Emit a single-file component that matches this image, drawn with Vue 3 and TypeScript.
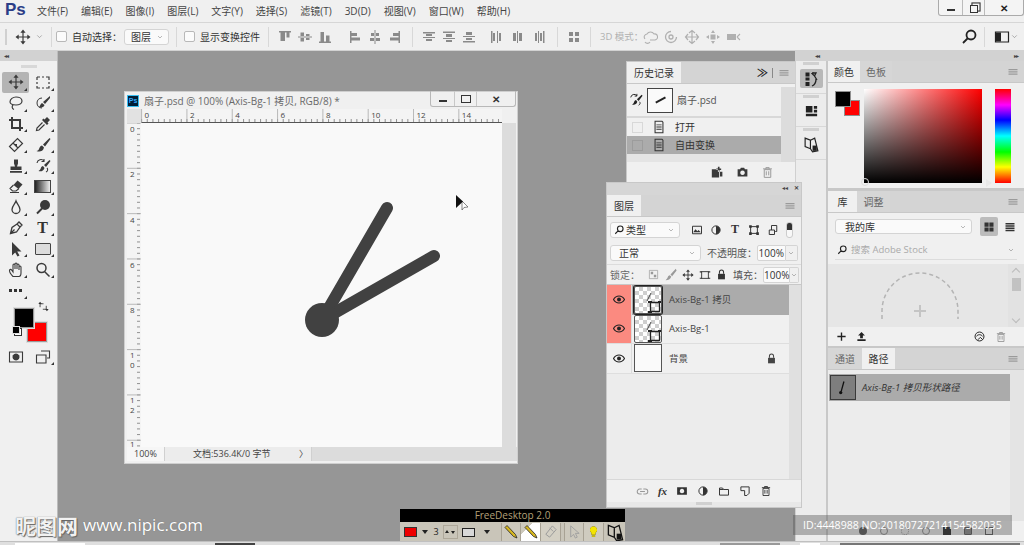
<script setup lang="ts">
import { h } from 'vue'

type IconDef = { f?: string; s?: string; w?: number }

const icons: Record<string, IconDef> = {
  move: { s: 'M8 3v10M3 8h10', f: 'M8 .5l2.6 3.2H5.4zM8 15.500l-2.600-3.200h5.200zM.5 8l3.200-2.600v5.200zM15.500 8l-3.200 2.600V5.400z', w: 1.2 },
  chev: { s: 'M4 6l4 4 4-4', w: 1 },
  marquee: { s: 'M2 3h3M7 3h2M11 3h3v3M14 8v2M14 12v2h-3M9 14H7M5 14H2v-2M2 10V8M2 6V3', w: 1.2 },
  lasso: { s: 'M2 7c0-3 3-5 6-5s6 1.500 6 4-3 4-6 4-6-1-6-3zM5 10c-1 1-1.500 3.500 1 4.500', w: 1.2 },
  quick: { s: 'M7 3C4 3 2 5 2 8s2 5 5 5', f: 'M15 1L8 7l2 2 5-6zM7 8c-2 1-1.500 3-3 4 3 1 5 0 5.500-2z', w: 1 },
  crop: { s: 'M4 1v11h11M1 4h11v11', w: 2 },
  dropper: { f: 'M12 1l3 3-2.500 2.500 1 1-1.500 1.500-5-5 1.500-1.500 1 1z', s: 'M7.500 6.500L2 12l-.5 2.500L4 14l5.500-5.500', w: 1.2 },
  heal: { s: 'M1.500 9.500l8-8 5 5-8 8zM5 6l5 5', f: 'M7 7h2v2H7z', w: 1.2 },
  brush: { f: 'M14.500 1L8 7.500l2 2L15.500 2zM7 8.500c-2 .5-2.500 2-3 3.500-.3 1-1.500 2-2.500 2 2.500 1.200 6.500.8 7.500-3.500z' },
  stamp: { f: 'M6 1.500h4v4l-1 3h4.500V12h-11V8.500H7l-1-3zM2 13h12v1.800H2z' },
  histbrush: { f: 'M14.500 2L9 7l2 2 4.500-6zM8 8c-2 .5-2 2-2.500 3-.3.8-1 1.500-2 2 2 .8 5 .5 6-3z', s: 'M2 5a4 4 0 0 1 7-2M9 1v2.500H6.500M12 10c1 1 1 3-1 4', w: 1.100 },
  eraser: { f: 'M9.500 2.500l5 4-4 4.500-5-4z', s: 'M5.500 7l-3.500 3.500L4.500 13H8l3-2.500M2 14.500h9', w: 1.100 },
  drop: { s: 'M8 2C7 5 4 7 4 10.500a4 4 0 0 0 8 0C12 7 9 5 8 2z', w: 1.300 },
  burn: { f: 'M15 6a5 5 0 1 1-10 0 5 5 0 0 1 10 0z', s: 'M7 9.500L2 14.500', w: 2 },
  pen: { s: 'M2.500 13.500l1.500-6L9 4l3 3-3.500 5zM2.500 13.500L6.500 9.500M9 4l2-2 3 3-2 2', w: 1.300 },
  arrow: { f: 'M4 1v13.500l3.200-3 2.300 4 2-1-2.300-4h4.300z' },
  hand: { s: 'M5 14.500C3.500 13 1.500 10 1.500 8.500s1.500-1.500 2.500 0L5 10V3a1 1 0 0 1 2 0v4V2a1 1 0 0 1 2 0v5V3a1 1 0 0 1 2 0v5V5a1 1 0 0 1 2 0v6c0 2-1 3.500-2 3.500z', w: 1.100 },
  zoom: { s: 'M11 6a4.500 4.500 0 1 1-9 0 4.500 4.500 0 0 1 9 0zM9.500 9.500L14.500 14.500', w: 1.500 },
  mask: { s: 'M1.500 3h13v10h-13z', f: 'M8 4.500a3.500 3.500 0 1 0 .01 0z', w: 1.100 },
  screen: { s: 'M6 2h8.500v7H12M1.500 6H11v8H1.500z', w: 1.100 },
  swap: { s: 'M3 9V4h5M12 7v5H7', f: 'M3 1L.5 4.500h5zM13 15l2.500-3.500h-5z', w: 1.200 },
  alignT: { f: 'M2 2h12v1.500H2zM3.500 3.500H8V12H3.500zM9.500 3.500h3v5h-3z' },
  alignV: { f: 'M1 7.500h14v1H1zM3.500 3.500H7v9H3.500zM9 5h3.500v6H9z' },
  alignB: { f: 'M2 12.500h12V14H2zM3.500 3H7v9.500H3.500zM9 6.500h3.500v6H9z' },
  alignL: { f: 'M3 2h1.500v12H3zM4.500 4H10v3H4.500zM4.500 8.500H13v3H4.500z' },
  alignH: { f: 'M7.500 1h1v14h-1zM4 4h8v3H4zM3 9h10v3H3z' },
  alignR: { f: 'M11.500 2H13v12h-1.500zM6 4h5.500v3H6zM3 8.500h8.500v3H3z' },
  distT: { f: 'M2 3h12v1.500H2zM5 5h6v2H5zM2 8h12v1H2zM5 10h6v2H5z' },
  distV: { f: 'M2 2.500h12V4H2zM5 5h6v3H5zM2 9h12v1H2zM5 11h6v2H5z' },
  distB: { f: 'M5 3h6v3H5zM2 7h12v1H2zM5 9h6v2H5zM2 12h12v1.500H2z' },
  distL: { f: 'M3 2h1.500v12H3zM5 4h2v8H5zM9 2h1v12H9zM11 4h2v8h-2z' },
  distC: { f: 'M3 4h3v8H3zM7 2h1v12H7zM9 4h3v8H9z' },
  distR: { f: 'M3 4h2v8H3zM6 2h1v12H6zM8 4h2v8H8zM11 2h1.500v12H11z' },
  spread: { f: 'M3 3h4v4H3zM9 3h4v4H9zM3 9h4v4H3zM9 9h4v4H9z' },
  cloud3d: { s: 'M3 10a3 3 0 0 1 2-5 4 4 0 0 1 7 0 3 3 0 0 1 1 6H8M3 13a3 3 0 0 0 5 0', w: 1.100 },
  orbit: { s: 'M13.500 8a5.500 5.500 0 1 1-5.500-5.500M10 8a2 2 0 1 1-4 0 2 2 0 0 1 4 0z', w: 1.300 },
  pan3d: { s: 'M8 1.500v13M1.500 8h13M5 4l3-2.500L11 4M5 12l3 2.500 3-2.500M4 5L1.500 8 4 11M12 5l2.500 3L12 11', w: 1.200 },
  slide3d: { f: 'M5.500 5.500h5v5h-5zM8 1L6 4h4zM8 15l-2-3h4zM1 8l3-2v4zM15 8l-3-2v4z' },
  camera3d: { f: 'M1 5h9v6H1z', s: 'M11 8l3-3M11 8l3 3', w: 1.100 },
  search: { s: 'M14.500 6a4.500 4.500 0 1 1-9 0 4.500 4.500 0 0 1 9 0zM6.500 9.500L2 14', w: 1.800 },
  workspace: { s: 'M1.500 3h13v10h-13z', f: 'M2 3.500h5v9H2z', w: 1.200 },
  menu: { f: 'M2 4h12v1.500H2zM2 7h12v1.500H2zM2 10h12v1.500H2z' },
  page: { s: 'M3.500 1.500h8l1 1v12h-9z', f: 'M5 5h6v1H5zM5 7.500h6v1H5zM5 10h6v1H5z', w: 1.200 },
  newdoc: { f: 'M1 4h7l2 2v8H1zM8.500 1h2v2h2v2h-2v2h-2V5h-2V3h2zM11 7h3v6h-3z' },
  camera: { f: 'M2 4h3l1-2h4l1 2h3v9H2z M8 5.500a2.800 2.800 0 1 0 .01 0z' },
  trash: { s: 'M4 4.500h8V14H4zM2.500 3.500h11M6 3.500V2h4v1.500M6.500 6.500v5M9.500 6.500v5', w: 1.200 },
  history: { f: 'M2.500 1.500h4v4h-4zM2.500 6.500h4v3h-4zM2.500 11h4v4h-4z', s: 'M13 8c0 4-1.500 6-4 7M9 2h4l-1.500 3L14 9M11 1.500l-2 1 2 2', w: 1.300 },
  cube: { f: 'M2 2h7v7H2zM10.500 2H14v3h-3.500zM10.500 6H14v3h-3.500zM2 10.500h12V13H2z' },
  glyph: { s: 'M2 2l5 2v8l-5-2zM7 4l4-2 3 12-5 1-2-3', f: 'M9 9h4v5H9z', w: 1.100 },
  image: { s: 'M2 3h12v10H2z', f: 'M3 11l3-4 2.500 2.500L10 8l3 3z', w: 1.300 },
  adjust: { s: 'M13.500 8a5.500 5.500 0 1 1-11 0 5.500 5.500 0 0 1 11 0z', f: 'M8 2.500a5.500 5.500 0 0 1 0 11z', w: 1.300 },
  frame: { s: 'M3.500 3.500h9v9h-9z', f: 'M1.500 1.500h3.500v3.500H1.500zM11 1.500h3.500v3.500H11zM1.500 11h3.500v3.500H1.500zM11 11h3.500v3.500H11z', w: 1.300 },
  smart: { s: 'M6 8V2h7v8h-2M3 8h7v6H3z', w: 1.300 },
  checker: { s: 'M2 2h12v12H2z', f: 'M4 4h3.500v3.500H4zM8.500 8.500H12V12H8.500z', w: 1 },
  penlock: { f: 'M14.500 1L8 8l2 2 5.500-7zM7 9c-2 .5-2 2-3 3.500L2 15c3 0 6-1 7-4.500z' },
  cropsm: { s: 'M3.500 3.500h9v9h-9z', f: 'M1 3h3v1.500H1zM12 3h3v1.500h-3zM1 11.500h3V13H1zM12 11.500h3V13h-3z', w: 1.200 },
  lock: { f: 'M3 7h10v8H3z', s: 'M5 7V4.500a3 3 0 0 1 6 0V7', w: 1.500 },
  link: { s: 'M7 5H4.500a3 3 0 0 0 0 6H7M9 5h2.500a3 3 0 0 1 0 6H9M5 8h6', w: 1.300 },
  layermask: { f: 'M1.500 3h13v10h-13zM8 5a3 3 0 1 0 .01 0z' },
  folder: { s: 'M2 4h4l1.500 2H14v7.500H2zM2 6h5.500', w: 1.300 },
  newlayer: { s: 'M2.500 2.500h11V11l-3 3h-3V7.500H2.500z', w: 1.300 },
  plus: { f: 'M7 2h2v5h5v2H9v5H7V9H2V7h5z' },
  upload: { f: 'M8 1.500l5 5H10v4H6v-4H3zM2 12h12v2.500H2z' },
  cc: { s: 'M13.500 8a5.500 5.500 0 1 1-11 0 5.500 5.500 0 0 1 11 0zM4 8c2-3 6-3 8 0M6 12l3-3 3 3', w: 1.200 },
  grid: { f: 'M2 2h5.500v5.500H2zM8.500 2H14v5.500H8.500zM2 8.500h5.500V14H2zM8.500 8.500H14V14H8.500z' },
  list: { f: 'M2 2.500h12v2H2zM2 5.500h12v2H2zM2 8.500h12v2H2zM2 11.500h12v2H2z' },
  eraserSm: { s: 'M10 2l4 4-7 8-4-3zM7 4l4 4', w: 1 },
  pointer: { s: 'M5 2v12l3-3 2 4 2-1-2-4h4z', w: 1 },
  bulb: { f: 'M8 1.500a4.500 4.500 0 0 0-2.500 8.200V12h5V9.700A4.500 4.500 0 0 0 8 1.500zM6 13h4v1.500H6z' }
}

const Ic = (p: { n: string; s?: number }) => {
  const def = icons[p.n] ?? {}
  const size = p.s ?? 16
  const kids = []
  if (def.s) kids.push(h('path', { d: def.s, fill: 'none', stroke: 'currentColor', 'stroke-width': def.w ?? 1.2 }))
  if (def.f) kids.push(h('path', { d: def.f, fill: 'currentColor', 'fill-rule': 'evenodd' }))
  return h('svg', { viewBox: '0 0 16 16', width: size, height: size, style: 'display:block;flex:none' }, kids)
}
Ic.props = ['n', 's']

const menus = ['文件(F)', '编辑(E)', '图像(I)', '图层(L)', '文字(Y)', '选择(S)', '滤镜(T)', '3D(D)', '视图(V)', '窗口(W)', '帮助(H)']

const tools = ['move', 'marquee', 'lasso', 'quick', 'crop', 'dropper', 'heal', 'brush', 'stamp', 'histbrush', 'eraser', 'gradient', 'drop', 'burn', 'pen', 'text', 'arrow', 'shape', 'hand', 'zoom']

const STEP = 45.32
const hMajor = Array.from({ length: 8 }, (_, i) => ({ x: 14.6 + i * STEP, label: String(i * 2) }))
const hMinor = Array.from({ length: 64 }, (_, i) => 14.6 + (i * STEP) / 8).filter((x) => x < 375)
const vMajor = Array.from({ length: 8 }, (_, i) => ({ y: i * STEP, label: i === 7 ? '1' : String(i * 2) }))
const vMinor = Array.from({ length: 58 }, (_, i) => (i * STEP) / 8).filter((y) => y < 324)

const layers = [
  { name: 'Axis-Bg-1 拷贝', red: true, sel: true, kind: 'check', locked: false },
  { name: 'Axis-Bg-1', red: true, sel: false, kind: 'check', locked: false },
  { name: '背景', red: false, sel: false, kind: 'plain', locked: true }
]
</script>

<template>
  <div class="app">
    <header class="menubar">
      <span class="ps">Ps</span>
      <nav class="menus"><span v-for="m in menus" :key="m">{{ m }}</span></nav>
      <div class="winctl">
        <span class="cell c1"><i class="min"></i></span>
        <span class="cell c2"><i class="rest"></i></span>
        <span class="cell c3">✕</span>
      </div>
    </header>

    <div class="options">
      <i class="grip"></i>
      <Ic class="ml8" n="move" />
      <Ic class="ml4 thin" n="chev" :s="9" />
      <i class="sep ml7"></i>
      <i class="check ml4"></i>
      <span class="opt-label l1">自动选择：</span>
      <span class="select s1">图层<Ic class="thin" n="chev" :s="8" /></span>
      <i class="sep ml7"></i>
      <i class="check ml7"></i>
      <span class="opt-label l2">显示变换控件</span>
      <i class="sep ml11"></i>
      <div class="agroup ml8"><Ic n="alignT" /><Ic n="alignV" /><Ic n="alignB" /></div>
      <div class="agroup ml14"><Ic n="alignL" /><Ic n="alignH" /><Ic n="alignR" /></div>
      <i class="sep ml9"></i>
      <div class="agroup ml8"><Ic n="distT" /><Ic n="distV" /><Ic n="distB" /></div>
      <div class="agroup wide ml11"><Ic n="distL" /><Ic n="distC" /><Ic n="distR" /></div>
      <i class="sep ml9"></i>
      <div class="agroup ml8"><Ic n="spread" /></div>
      <i class="sep ml8"></i>
      <span class="mode">3D 模式：</span>
      <div class="agroup d3"><Ic n="cloud3d" /><Ic n="orbit" /><Ic n="pan3d" /><Ic n="slide3d" /><Ic n="camera3d" /></div>
      <div class="spacer"></div>
      <Ic class="dark" n="search" />
      <i class="sep ml7"></i>
      <Ic class="ml9 dark" n="workspace" />
      <Ic class="thin" n="chev" :s="9" />
    </div>

    <div class="workspace">
      <aside class="toolbox">
        <div class="collapse left">◂◂</div>
        <div class="dragline"><i></i></div>
        <div class="toolgrid">
          <span v-for="(t, i) in tools" :key="t" class="tool" :class="{ active: i === 0 }">
            <i v-if="t === 'gradient'" class="gradient-ic"></i>
            <span v-else-if="t === 'text'" class="t-glyph">T</span>
            <i v-else-if="t === 'shape'" class="shape-ic"></i>
            <Ic v-else :n="t" />
          </span>
          <span class="tool dots"><i></i><i></i><i></i></span>
        </div>
        <div class="swatches">
          <i class="fg"></i><i class="bg"></i>
          <Ic class="swap" n="swap" :s="11" />
          <span class="mini"><i></i><i></i></span>
        </div>
        <div class="modes">
          <span class="tool"><Ic n="mask" /></span>
          <span class="tool"><Ic n="screen" /></span>
        </div>
      </aside>

      <main class="canvas">
        <section class="doc">
          <div class="doc-title">
            <span class="doc-ps">Ps</span>
            <span class="doc-name">扇子.psd @ 100% (Axis-Bg-1 拷贝, RGB/8) *</span>
            <div class="doc-ctl">
              <span class="dc d1"><i class="min"></i></span>
              <span class="dc d2"><i class="maxi"></i></span>
              <span class="dc d3">✕</span>
            </div>
          </div>
          <div class="doc-inner">
            <svg class="ruler-h" width="375" height="14" viewBox="0 0 375 14">
              <rect x="0" y="0" width="14.600" height="14" fill="#e2e2e2" />
              <line v-for="x in hMinor" :key="x" :x1="x" :x2="x" y1="10" y2="13" stroke="#777" stroke-width=".8" />
              <g v-for="m in hMajor" :key="m.x">
                <line :x1="m.x" :x2="m.x" y1="0" y2="14" stroke="#aaa" stroke-width=".8" />
                <text :x="m.x + 3" y="9" class="rt">{{ m.label }}</text>
              </g>
              <line x1="14.600" x2="375" y1="13.500" y2="13.500" stroke="#555" stroke-width="1.200" />
            </svg>
            <div class="doc-mid">
              <svg class="ruler-v" width="14" height="324" viewBox="0 0 14 324">
                <line v-for="y in vMinor" :key="y" x1="10" x2="13" :y1="y" :y2="y" stroke="#777" stroke-width=".8" />
                <g v-for="(m, i) in vMajor" :key="m.y">
                  <line x1="0" x2="14" :y1="m.y" :y2="m.y" stroke="#aaa" stroke-width=".8" />
                  <text v-if="m.label.length === 1" x="3" :y="m.y + (i === 7 ? 6.500 : 9)" class="rt">{{ m.label }}</text>
                  <template v-else>
                    <text x="3" :y="m.y + 8" class="rt">{{ m.label[0] }}</text>
                    <text x="3" :y="m.y + 18" class="rt">{{ m.label[1] }}</text>
                  </template>
                </g>
              </svg>
              <svg class="art" width="361" height="324" viewBox="0 0 361 324">
                <line x1="181" y1="197" x2="246" y2="85" stroke="#414141" stroke-width="12" stroke-linecap="round" />
                <line x1="181" y1="197" x2="293" y2="133" stroke="#414141" stroke-width="12" stroke-linecap="round" />
                <circle cx="181" cy="197" r="17" fill="#414141" />
                <path d="M321 78l6 6-4 .5-2 2.500z" fill="#fff" stroke="#555" stroke-width=".7" />
                <path d="M315 72v13l7-6.500z" fill="#111" />
              </svg>
              <div class="doc-scroll"></div>
            </div>
            <div class="doc-status">
              <span class="st-zoom">100%</span>
              <span class="st-info"><b>文档:536.4K/0 字节</b><i>〉</i></span>
              <span class="st-rest"></span>
            </div>
          </div>
        </section>

        <section class="history panel">
          <div class="tabs">
            <span class="tab on">历史记录</span>
            <span class="fill"></span>
            <span class="more">≫</span><i class="vbar"></i>
            <Ic class="menu-ic" n="menu" :s="12" />
          </div>
          <div class="hist-body">
            <div class="hist-list">
              <div class="snap">
                <Ic class="dark" n="histbrush" :s="14" />
                <span class="snap-thumb"><i></i></span>
                <span class="snap-name">扇子.psd</span>
              </div>
              <div class="hist-row"><i class="hbox"></i><Ic n="page" :s="14" /><span>打开</span></div>
              <div class="hist-row sel"><i class="hbox"></i><Ic n="page" :s="14" /><span>自由变换</span></div>
              <div class="hist-blank"></div>
            </div>
            <div class="hist-scroll"></div>
          </div>
          <div class="hist-foot">
            <Ic n="newdoc" :s="13" /><Ic n="camera" :s="13" /><Ic class="grey" n="trash" :s="13" />
          </div>
        </section>

        <section class="layers panel">
          <div class="float-bar"><span>◂◂</span><span class="x">✕</span></div>
          <div class="tabs">
            <span class="tab on">图层</span>
            <span class="fill"></span>
            <Ic class="menu-ic" n="menu" :s="12" />
          </div>
          <div class="l-filter">
            <span class="select s2"><Ic class="dark" n="search" :s="10" />类型<span class="fill"></span><Ic class="thin" n="chev" :s="8" /></span>
            <Ic n="image" :s="12" /><Ic n="adjust" :s="12" /><span class="t-sm">T</span><Ic n="frame" :s="12" /><Ic n="smart" :s="12" />
            <span class="toggle"></span>
          </div>
          <div class="l-blend">
            <span class="select s3">正常<span class="fill"></span><Ic class="thin" n="chev" :s="8" /></span>
            <span class="lab">不透明度：</span>
            <span class="num">100%</span><span class="numarrow"><Ic class="thin" n="chev" :s="8" /></span>
          </div>
          <div class="l-lock">
            <span class="lab g">锁定：</span>
            <div class="lockicons">
              <Ic class="grey" n="checker" :s="11" /><Ic class="grey" n="penlock" :s="13" /><Ic n="move" :s="12" /><Ic n="cropsm" :s="12" /><Ic n="lock" :s="11" />
            </div>
            <span class="lab">填充：</span>
            <span class="num">100%</span><span class="numarrow"><Ic class="thin" n="chev" :s="8" /></span>
          </div>
          <div class="l-body">
            <div class="l-list">
              <div v-for="l in layers" :key="l.name" class="layer" :class="{ sel: l.sel }">
                <span class="eye" :class="{ red: l.red }">
                  <svg width="12" height="9" viewBox="0 0 12 9"><path d="M.5 4.500C2 2 4 1 6 1s4 1 5.500 3.500C10 7 8 8 6 8S2 7 .5 4.500z" fill="none" stroke="#222" stroke-width="1.200" /><circle cx="6" cy="4.500" r="2" fill="#222" /></svg>
                </span>
                <span class="thumb" :class="[l.kind, { picked: l.sel }]">
                  <svg v-if="l.kind === 'check'" width="26" height="26" viewBox="0 0 26 26"><path d="M12 14l4-8" stroke="#444" stroke-width="1" /><path d="M15.500 15.500h9v9h-9z" fill="none" stroke="#222" stroke-width="1.300" /><path d="M13 14h4v2h-4zM23 14h3v2h-3zM13 24h4v2h-4z" fill="#222" /></svg>
                </span>
                <span class="lname">{{ l.name }}</span>
                <Ic v-if="l.locked" class="lock-ic" n="lock" :s="11" />
              </div>
            </div>
            <div class="l-scroll"></div>
          </div>
          <div class="l-foot">
            <Ic class="grey" n="link" :s="13" /><span class="fx">fx</span><Ic n="layermask" :s="12" /><Ic n="adjust" :s="12" /><Ic n="folder" :s="12" /><Ic n="newlayer" :s="12" /><Ic n="trash" :s="12" />
          </div>
          <div class="l-grip"><i></i></div>
        </section>

        <section class="freedesk">
          <div class="fd-title">FreeDesktop 2.0</div>
          <div class="fd-bar">
            <span class="fd-col"><i class="fd-red"></i></span>
            <span class="fd-tri"></span>
            <span class="fd-n">3</span>
            <span class="fd-step"><i class="up"></i><i class="dn"></i></span>
            <span class="fd-box"><i></i></span>
            <span class="fd-tri b"></span>
            <span class="fd-btn first">
              <svg width="15" height="15" viewBox="0 0 15 15"><path d="M2 3.500L4 1.500l8.500 9 1.500 3.500-3.500-1.500z" fill="#d8b820" stroke="#222" stroke-width=".8" /></svg>
            </span>
            <span class="fd-btn white">
              <svg width="15" height="15" viewBox="0 0 15 15"><path d="M2 3.500L4 1.500l8.500 9 1.500 3.500-3.500-1.500z" fill="#d8b820" stroke="#222" stroke-width=".8" /></svg>
            </span>
            <span class="fd-btn er"><Ic n="eraserSm" :s="15" /></span>
            <span class="fd-btn ptr first2"><Ic n="pointer" :s="15" /></span>
            <span class="fd-btn blb"><Ic n="bulb" :s="13" /></span>
            <Ic class="gl" n="glyph" :s="19" />
          </div>
        </section>
      </main>

      <aside class="dock">
        <div class="collapse right"><span>◂◂</span><span>▸▸</span></div>
        <div class="dock-main">
          <div class="strip">
            <div class="strip-cell"><i class="dg"></i><span class="sbtn on"><Ic n="history" :s="16" /></span></div>
            <div class="strip-cell"><i class="dg"></i><span class="sbtn"><Ic n="cube" :s="15" /></span></div>
            <div class="strip-cell"><i class="dg"></i><span class="sbtn"><Ic n="glyph" :s="17" /></span></div>
            <div class="strip-rest"></div>
          </div>
          <div class="col">
            <section class="color">
              <div class="tabs">
                <span class="tab on t32">颜色</span><span class="tab t32">色板</span><span class="fill"></span>
                <Ic class="menu-ic" n="menu" :s="12" />
              </div>
              <div class="color-body">
                <div class="cswatch"><i class="cbg"></i><i class="cfg"></i></div>
                <div class="cfield"><i class="cdot"></i></div>
                <div class="chue"><i class="ctri"></i></div>
              </div>
            </section>

            <section class="lib">
              <div class="tabs">
                <span class="tab on t30">库</span><span class="tab t33">调整</span><span class="fill"></span>
                <Ic class="menu-ic" n="menu" :s="12" />
              </div>
              <div class="lib-select">
                <span class="select s4">我的库<span class="fill"></span><Ic class="thin" n="chev" :s="8" /></span>
                <span class="view on"><Ic n="grid" :s="12" /></span>
                <span class="view"><Ic n="list" :s="12" /></span>
              </div>
              <div class="lib-search">
                <Ic class="dark" n="search" :s="10" /><span>搜索 Adobe Stock</span><span class="fill"></span><Ic class="thin" n="chev" :s="8" />
              </div>
              <div class="lib-area">
                <div class="lib-drop">
                  <svg width="80" height="50" viewBox="0 0 80 50">
                    <path d="M2 48V40a38 38 0 0 1 76 0v8" fill="none" stroke="#b4b4b4" stroke-width="1.500" stroke-dasharray="4 3" />
                    <path d="M40 34v12M34 40h12" stroke="#c4c4c4" stroke-width="2" />
                  </svg>
                </div>
                <div class="lib-scroll">
                  <span class="caret up"></span><i class="thumbbar"></i><span class="fill"></span><span class="caret dn"></span>
                </div>
              </div>
              <div class="lib-foot">
                <Ic n="plus" :s="11" /><Ic n="upload" :s="11" /><span class="fill"></span>
                <Ic n="cc" :s="13" /><Ic class="grey" n="trash" :s="12" />
              </div>
            </section>

            <section class="paths">
              <div class="tabs">
                <span class="tab t34">通道</span><span class="tab on t33">路径</span><span class="fill"></span>
                <Ic class="menu-ic" n="menu" :s="12" />
              </div>
              <div class="path-body">
                <div class="path-list">
                  <div class="path-row">
                    <span class="path-thumb">
                      <svg width="26" height="24" viewBox="0 0 26 24"><path d="M14 5l-3 11" stroke="#111" stroke-width="1.400" /><circle cx="10.500" cy="17" r="1.800" fill="#111" /></svg>
                    </span>
                    <span class="path-name">Axis-Bg-1 拷贝形状路径</span>
                  </div>
                </div>
                <div class="path-scroll"></div>
              </div>
              <div class="path-foot">
                <i class="pf solid"></i><i class="pf ring"></i><i class="pf ring dash"></i><i class="pf ring"></i><i class="pf block"></i><i class="pf solid sq"></i><i class="pf sq"></i>
              </div>
            </section>
          </div>
        </div>
      </aside>
    </div>

    <footer class="taskbar"><i v-for="n in 5" :key="n" :class="'tb' + n"></i></footer>

    <div class="wm-left"><span class="wm-cn">昵图网</span><span class="wm-url">www.nipic.com</span></div>
    <div class="wm-right">ID:4448988 NO:20180727214154582035</div>
  </div>
</template>

<style scoped>
.app {
  position: relative;
  width: 1024px;
  height: 545px;
  overflow: hidden;
  display: flex;
  flex-direction: column;
  background: #f0f0f0;
  color: #3a3a3a;
  font-family: "Open Sans", "Noto Sans CJK SC", sans-serif;
  font-size: 10px;
  line-height: 1.2;
}
.fill, .spacer { flex: 1; }
i { display: block; font-style: normal; }
.ml4 { margin-left: 4px; } .ml7 { margin-left: 7px; } .ml8 { margin-left: 8px; } .ml9 { margin-left: 9px; } .ml11 { margin-left: 11px; } .ml14 { margin-left: 14px; }
.thin { color: #777; }
.dark { color: #222; }
.grey { color: #999; }

.menubar { height: 22px; flex: none; display: flex; align-items: center; padding-left: 5px; border-bottom: 1px solid #d6d6d6; position: relative; }
.ps { width: 32px; font-size: 17px; font-weight: 700; color: #2b3d87; font-family: "Liberation Sans", sans-serif; line-height: 20px; margin-top: -2px; }
.menus { display: flex; gap: 13px; font-size: 10px; color: #444; }
.winctl { position: absolute; right: 0; top: 0; height: 15px; width: 84px; display: flex; border: 1px solid #aaa; border-top: 0; border-radius: 0 0 3px 3px; background: #f4f4f4; }
.cell { display: flex; align-items: center; justify-content: center; height: 100%; border-right: 1px solid #bbb; font-size: 10px; color: #222; font-weight: 700; }
.c1 { width: 23px; } .c2 { width: 21px; } .c3 { flex: 1; border-right: 0; }
.min { width: 8px; height: 2px; background: #333; margin-top: 5px; }
.rest { width: 6px; height: 6px; border: 1.200px solid #333; box-shadow: 2px -2px 0 -0.5px #f4f4f4, 2px -2px 0 .6px #333; margin-top: 2px; }

.options { height: 27px; flex: none; display: flex; align-items: center; padding-right: 5px; border-bottom: 1px solid #d2d2d2; background: #f0f0f0; }
.grip { width: 2px; height: 16px; margin-left: 5px; background: #d0d0d0; }
.sep { width: 1px; height: 20px; background: #d8d8d8; }
.check { width: 11px; height: 11px; background: #fbfbfb; border: 1px solid #b8b8b8; border-radius: 2px; box-sizing: border-box; }
.opt-label { font-size: 10px; color: #333; margin-left: 5px; white-space: nowrap; }
.l1 { width: 52px; }
.l2 { width: 57px; margin-left: 5px; }
.select { display: inline-flex; align-items: center; box-sizing: border-box; background: #fafafa; border: 1px solid #d4d4d4; border-radius: 3px; color: #333; }
.s1 { width: 45px; height: 16px; padding: 0 4px 0 6px; justify-content: space-between; }
.agroup { display: flex; gap: 4px; color: #8a8a8a; }
.agroup.wide { gap: 6px; }
.agroup.d3 { gap: 5px; color: #b0b0b0; margin-left: 6px; }
.mode { margin-left: 9px; width: 36px; color: #b0b0b0; white-space: nowrap; font-size: 9.500px; }

.workspace { flex: 1; min-height: 0; display: flex; }
.collapse { height: 10px; background: #d2d2d2; font-size: 6px; line-height: 10px; color: #444; letter-spacing: -1px; }
.collapse.left { padding-left: 4px; }
.collapse.right { display: flex; justify-content: space-between; padding: 0 6px 0 20px; }

.toolbox { width: 58px; flex: none; background: #f0f0f0; border-right: 1px solid #bcbcbc; box-sizing: border-box; }
.dragline { height: 11px; display: flex; align-items: center; justify-content: center; }
.dragline i { width: 16px; height: 3px; background: #d8d8d8; }
.toolgrid { display: grid; grid-template-columns: 27px 27px; grid-auto-rows: 20.800px; padding-left: 2px; }
.tool { position: relative; display: flex; align-items: center; justify-content: center; color: #3a3a3a; border-radius: 2px; }
.tool::after { content: ""; position: absolute; right: 2px; bottom: 2px; border-style: solid; border-width: 0 0 3px 3px; border-color: transparent transparent #333 transparent; }
.tool.active { background: #b4b4b4; }
.gradient-ic { width: 15px; height: 11px; background: linear-gradient(90deg, #222, #eee); border: 1px solid #444; }
.shape-ic { width: 14px; height: 10px; background: #dcdcdc; border: 1px solid #444; border-radius: 1px; }
.t-glyph { font: 700 16px "Liberation Serif", serif; color: #333; }
.dots { gap: 2px; }
.dots i { width: 3px; height: 3px; background: #333; }
.swatches { position: relative; height: 46px; }
.fg, .bg { position: absolute; width: 20px; height: 20px; box-sizing: border-box; border: 1px solid #9a9a9a; outline: 1px solid #ddd; }
.fg { left: 14px; top: 7px; background: #000; z-index: 1; }
.bg { left: 27px; top: 21px; background: #f00; }
.swap { position: absolute; left: 38px; top: 0; color: #333; }
.mini { position: absolute; left: 12px; top: 25px; width: 10px; height: 10px; z-index: 2; }
.mini i { position: absolute; width: 6px; height: 6px; border: 1px solid #ddd; }
.mini i:first-child { right: 0; bottom: 0; background: #fff; border-color: #333; }
.mini i:last-child { left: 0; top: 0; background: #000; }
.modes { display: grid; grid-template-columns: 27px 27px; grid-auto-rows: 20px; padding-left: 2px; }
.modes .tool:first-child::after { display: none; }

.canvas { flex: 1; position: relative; background: #969696; min-width: 0; }

.doc { position: absolute; left: 66px; top: 40px; width: 394px; height: 373px; background: #f0f0f0; border: 1px solid #cfcfcf; box-sizing: border-box; display: flex; flex-direction: column; }
.doc-title { height: 17px; flex: none; display: flex; align-items: center; padding-left: 2px; position: relative; background: #f0f0f0; }
.doc-ps { width: 12px; height: 12px; background: #001e36; color: #31a8ff; border: 1px solid #38bdf0; box-sizing: border-box; font: 700 7px/10px "Liberation Sans", sans-serif; text-align: center; }
.doc-name { margin-left: 5px; font-size: 10px; color: #6a6a6a; white-space: nowrap; }
.doc-ctl { position: absolute; right: 1px; top: -1px; height: 15px; width: 84px; display: flex; border: 1px solid #b8b8b8; border-top: 0; border-radius: 0 0 3px 3px; }
.dc { display: flex; align-items: center; justify-content: center; border-right: 1px solid #c8c8c8; font-size: 10px; font-weight: 700; color: #333; }
.d1 { width: 23px; } .d2 { width: 21px; } .d3 { flex: 1; border-right: 0; }
.maxi { width: 8px; height: 6px; border: 1.500px solid #333; }
.doc-inner { flex: 1; display: flex; flex-direction: column; padding-left: 2px; min-height: 0; }
.ruler-h { display: block; flex: none; background: #f4f4f4; }
.rt { font: 8px "Open Sans", sans-serif; fill: #444; }
.doc-mid { display: flex; height: 324px; flex: none; }
.ruler-v { display: block; flex: none; background: #f4f4f4; }
.art { display: block; flex: none; background: #f9f9f9; }
.doc-scroll { width: 14px; flex: none; background: #dcdcdc; }
.doc-status { height: 14px; flex: none; display: flex; font-size: 9px; line-height: 14px; color: #444; }
.st-zoom { width: 38px; text-align: center; background: #f6f6f6; border-right: 1px solid #d0d0d0; box-sizing: border-box; }
.st-info { width: 147px; display: flex; justify-content: space-between; background: #ececec; padding: 0 3px 0 28px; box-sizing: border-box; border-right: 1px solid #d0d0d0; }
.st-info b { font-weight: 400; }
.st-rest { flex: 1; background: #dcdcdc; }

.panel { position: absolute; background: #f0f0f0; box-sizing: border-box; display: flex; flex-direction: column; }
.tabs { height: 22px; flex: none; display: flex; align-items: center; background: #d4d4d4; padding-right: 5px; border-bottom: 1px solid #c8c8c8; box-sizing: border-box; }
.tab { height: 100%; display: flex; align-items: center; justify-content: center; padding: 0 7px; font-size: 10px; color: #666; background: #d6d6d6; }
.tab.on { background: #f0f0f0; color: #333; }
.t30 { width: 29px; padding: 0; }
.t32 { width: 32px; padding: 0; }
.t33 { width: 33px; padding: 0; }
.t34 { width: 34px; padding: 0; }
.menu-ic { color: #9a9a9a; }
.more { font-size: 11px; color: #222; margin-right: 4px; font-weight: 700; }
.vbar { width: 1px; height: 10px; background: #888; margin-right: 5px; }

.history { left: 568px; top: 10px; width: 169px; height: 122px; border: 1px solid #c8c8c8; border-right: 0; }
.hist-body { display: flex; height: 79px; }
.hist-list { flex: 1; display: flex; flex-direction: column; }
.hist-scroll { width: 14px; background: #dcdcdc; margin: 3px 0 0; }
.snap { height: 34px; flex: none; display: flex; align-items: center; padding-left: 2px; gap: 4px; border-bottom: 2px solid #d8d8d8; box-sizing: border-box; }
.snap-thumb { width: 24px; height: 23px; border: 1px solid #444; background: #fafafa; display: flex; align-items: center; justify-content: center; }
.snap-thumb i { width: 11px; height: 1.500px; background: #222; transform: rotate(-28deg); }
.snap-name { margin-left: 0; color: #555; }
.hist-row { height: 18px; flex: none; display: flex; align-items: center; color: #333; }
.hist-row.sel { background: #ababab; }
.hbox { width: 9px; height: 9px; border: 1px solid #d8d8d8; margin: 0 9px 0 5px; }
.hist-row.sel .hbox { border-color: #9c9c9c; }
.hist-row span { margin-left: 9px; }
.hist-blank { flex: 1; background: #e4e4e4; }
.hist-foot { height: 20px; display: flex; align-items: center; justify-content: flex-end; gap: 12px; padding-right: 21px; }

.layers { left: 548px; top: 131px; width: 196px; height: 326px; border: 1px solid #c8c8c8; }
.float-bar { height: 12px; flex: none; background: #d6d6d6; display: flex; justify-content: flex-end; gap: 6px; padding-right: 2px; font-size: 6px; line-height: 11px; color: #444; }
.float-bar .x { font-weight: 700; }
.l-filter { height: 25px; flex: none; display: flex; align-items: center; gap: 7px; padding-left: 3px; color: #333; }
.s2 { width: 70px; height: 16px; padding: 0 4px 0 3px; gap: 2px; margin-right: 4px; }
.t-sm { font: 700 12px "Liberation Serif", serif; width: 12px; text-align: center; }
.toggle { width: 5px; height: 14px; border-radius: 3px; background: linear-gradient(#333 50%, #f8f8f8 50%); border: 1px solid #ccc; }
.l-blend { height: 22px; flex: none; display: flex; align-items: center; padding-left: 3px; }
.s3 { width: 95px; height: 16px; padding: 0 4px 0 8px; }
.lab { margin-left: 6px; color: #555; white-space: nowrap; }
.lab.g { margin: 0 4px 0 3px; color: #666; }
.num { width: 30px; height: 16px; background: #fafafa; border: 1px solid #d4d4d4; border-radius: 2px 0 0 2px; box-sizing: border-box; text-align: center; line-height: 14px; color: #333; margin-left: auto; }
.numarrow { width: 13px; height: 16px; border: 1px solid #d4d4d4; border-left: 0; box-sizing: border-box; display: flex; align-items: center; justify-content: center; margin-right: 3px; border-radius: 0 2px 2px 0; }
.l-lock { height: 21px; flex: none; display: flex; align-items: center; border-top: 1px solid #dcdcdc; border-bottom: 1px solid #c8c8c8; box-sizing: border-box; color: #333; }
.lockicons { display: flex; align-items: center; gap: 5px; margin-left: 4px; }
.l-body { flex: 1; display: flex; min-height: 0; background: #ececec; }
.l-list { flex: 1; display: flex; flex-direction: column; }
.l-scroll { width: 12px; background: #e0e0e0; }
.layer { height: 29.500px; flex: none; display: flex; align-items: center; box-sizing: border-box; border-bottom: 1px solid #dedede; background: #f0f0f0; }
.layer.sel { background: #ababab; border-bottom: 0; }
.eye { width: 25px; align-self: stretch; display: flex; align-items: center; justify-content: center; border-right: 1px solid #dcdcdc; box-sizing: border-box; }
.eye.red { background: #fb8a80; }
.thumb { width: 26px; height: 26px; margin-left: 2px; border: 1px solid #555; background: #fafafa; box-sizing: content-box; flex: none; }
.thumb.check { background: repeating-conic-gradient(#cfcfcf 0 25%, #fff 0 50%) 0 0 / 8px 8px; }
.thumb.picked { box-shadow: 0 0 0 1px #222; }
.thumb svg { display: block; }
.lname { margin-left: 7px; font-size: 9.500px; color: #444; }
.lock-ic { margin-left: auto; margin-right: 12px; color: #444; }
.l-foot { height: 22px; flex: none; display: flex; align-items: center; justify-content: center; gap: 9px; color: #333; border-top: 1px solid #d8d8d8; }
.fx { font: italic 700 11px "Liberation Serif", serif; color: #333; }
.l-grip { height: 5px; flex: none; background: #e8e8e8; display: flex; justify-content: center; }
.l-grip i { width: 16px; height: 3px; background: #d0d0d0; }

.freedesk { position: absolute; left: 342px; top: 458px; width: 225px; height: 33px; background: #b9b5aa; overflow: hidden; display: flex; flex-direction: column; }
.fd-title { height: 13px; flex: none; background: #000; color: #b4a078; font-size: 10px; line-height: 13px; text-align: center; }
.fd-bar { flex: 1; display: flex; align-items: center; padding-left: 2px; color: #222; background: #c9c5b9; overflow: hidden; }
.fd-col { width: 18px; height: 15px; display: flex; align-items: center; justify-content: center; margin-right: 4px; }
.fd-red { width: 11px; height: 8px; background: #e00; border: 1px solid #333; }
.fd-tri { width: 0; height: 0; border: 3px solid transparent; border-top: 4px solid #222; margin-top: 3px; }
.fd-tri.b { margin-left: 7px; margin-right: 11px; }
.fd-n { font-size: 9px; width: 8px; margin-left: 5px; }
.fd-step { width: 16px; height: 14px; margin-left: 2px; display: flex; align-items: center; gap: 2px; border: 1px solid #aea89a; box-sizing: border-box; padding: 0 1px; }
.fd-step i { width: 0; height: 0; border: 2.500px solid transparent; }
.fd-step .up { border-bottom: 3.500px solid #222; margin-top: -4px; }
.fd-step .dn { border-top: 3.500px solid #222; margin-top: 3px; }
.fd-box { width: 18px; display: flex; justify-content: center; margin-left: 3px; }
.fd-box i { width: 11px; height: 7px; border: 1px solid #222; background: #d8d8d8; }
.fd-btn { width: 20px; height: 19px; flex: none; display: flex; align-items: center; justify-content: center; border-right: 1px solid #a8a294; border-bottom: 1px solid #a8a294; box-sizing: border-box; background: #cdc9bd; }
.fd-btn.first { border-left: 1px solid #a8a294; }
.fd-btn.white { background: linear-gradient(135deg, #cdc9bd 30%, #fff 30%); }
.fd-btn.first2 { margin-left: 3px; border-left: 1px solid #a8a294; }
.er { color: #999; background: #d4d0c4; }
.ptr { color: #a0a0a0; }
.blb { color: #f4e400; background: #cfcbbf; }
.blb svg { filter: drop-shadow(0 0 .5px #222); }
.gl { color: #111; margin-left: 2px; }

.dock { width: 229px; flex: none; display: flex; flex-direction: column; background: #c8c8c8; }
.dock-main { flex: 1; display: flex; min-height: 0; }
.strip { width: 31px; flex: none; margin-right: 2px; display: flex; flex-direction: column; background: #ececec; border-left: 1px solid #d0d0d0; box-sizing: border-box; }
.strip-cell { height: 33px; flex: none; display: flex; flex-direction: column; align-items: center; border-bottom: 1px solid #d8d8d8; box-sizing: border-box; }
.dg { width: 16px; height: 3px; background: #d0d0d0; margin: 1px 0 4px; }
.sbtn { width: 23px; height: 19px; display: flex; align-items: center; justify-content: center; border-radius: 2px; color: #222; }
.sbtn.on { background: #b8b8b8; }
.strip-rest { flex: 1; }
.col { flex: 1; display: flex; flex-direction: column; min-width: 0; }

.color { height: 127px; flex: none; background: #f0f0f0; margin-bottom: 3px; }
.color-body { position: relative; height: 105px; }
.cswatch { position: absolute; left: 7px; top: 8px; width: 26px; height: 26px; }
.cfg, .cbg { position: absolute; width: 16px; height: 16px; border: 1px solid #8f8f8f; box-sizing: border-box; }
.cfg { left: 0; top: 0; background: #000; }
.cbg { left: 9px; top: 9px; background: #f00; }
.cfield { position: absolute; left: 36px; top: 6px; width: 118px; height: 94px; background: linear-gradient(to top, #000, rgba(0, 0, 0, 0)), linear-gradient(to right, #fff, #f00); }
.cdot { position: absolute; left: -3px; bottom: -3px; width: 6px; height: 6px; border: 1px solid #ddd; border-radius: 50%; }
.chue { position: absolute; left: 167px; top: 6px; width: 16px; height: 94px; background: linear-gradient(to bottom, #f00, #f0f 17%, #00f 33%, #0ff 50%, #0f0 67%, #ff0 83%, #f00); }
.ctri { position: absolute; left: -9px; bottom: -4px; width: 0; height: 0; border: 4px solid transparent; border-left: 6px solid #e8e8e8; }

.lib { height: 155px; flex: none; background: #f0f0f0; margin-bottom: 2px; display: flex; flex-direction: column; }
.lib-select { height: 27px; flex: none; display: flex; align-items: center; padding-left: 7px; }
.s4 { width: 137px; height: 15px; padding: 0 4px 0 9px; }
.view { width: 18px; height: 19px; margin-left: 8px; display: flex; align-items: center; justify-content: center; border-radius: 2px; color: #333; }
.view.on { background: #bcbcbc; }
.view + .view { margin-left: 3px; }
.lib-search { height: 19px; flex: none; display: flex; align-items: center; gap: 4px; margin: 0 7px; padding: 0 2px; border-bottom: 1px solid #dcdcdc; color: #aaa; font-size: 9.500px; }
.lib-area { height: 63px; flex: none; margin-top: 4px; display: flex; background: #e6e6e6; }
.lib-drop { flex: 1; padding: 7px 0 0 52px; overflow: hidden; }
.lib-drop svg { display: block; }
.lib-scroll { width: 16px; flex: none; display: flex; flex-direction: column; align-items: center; padding: 5px 0; box-sizing: border-box; background: #e2e2e2; }
.caret { width: 5px; height: 5px; border-left: 1px solid #bbb; border-top: 1px solid #bbb; transform: rotate(45deg); }
.caret.dn { transform: rotate(225deg); }
.thumbbar { width: 9px; height: 13px; background: #c2c2c2; margin-top: 3px; }
.lib-foot { flex: 1; display: flex; align-items: center; gap: 9px; padding: 0 17px 0 8px; color: #222; }

.paths { flex: 1; min-height: 0; background: #f0f0f0; display: flex; flex-direction: column; }
.path-body { flex: 1; display: flex; min-height: 0; }
.path-list { flex: 1; padding: 4px 0 0 1px; background: #ececec; }
.path-row { height: 27px; display: flex; align-items: center; background: #ababab; }
.path-thumb { width: 24px; height: 23px; margin-left: 1px; background: #7e7e7e; border: 1px solid #3a3a3a; display: flex; align-items: center; justify-content: center; overflow: hidden; }
.path-name { margin-left: 6px; font-style: italic; color: #333; font-size: 9.500px; white-space: nowrap; }
.path-scroll { width: 14px; background: #e4e4e4; }
.path-foot { height: 20px; flex: none; display: flex; align-items: center; gap: 13px; padding-left: 31px; }
.pf { width: 8px; height: 8px; box-sizing: border-box; }
.pf.solid { background: #555; border-radius: 50%; }
.pf.ring { border: 1px solid #888; border-radius: 50%; }
.pf.dash { border-style: dotted; }
.pf.block { background: #222; }
.pf.sq { border-radius: 0; border: 1px solid #555; }
.pf.solid.sq { background: #888; border-radius: 1px; }

.taskbar { height: 4px; flex: none; position: relative; background: #dfdfdf; border-top: 1px solid #c0c0c0; box-sizing: border-box; display: flex; }
.taskbar i { position: absolute; top: 1px; height: 2px; }
.tb1 { left: 15px; width: 70px; background: #fff; }
.tb2 { left: 215px; width: 40px; background: #444; }
.tb3 { left: 720px; width: 60px; background: #999; }
.tb4 { left: 800px; width: 20px; background: #fff; }
.tb5 { left: 840px; width: 180px; background: #777; }

.wm-left { position: absolute; left: 15px; top: 513px; display: flex; align-items: center; gap: 5px; color: #fff; pointer-events: none; }
.wm-cn { font: 700 21px/24px "Noto Sans CJK SC", sans-serif; color: #f2f2f2; text-shadow: 0 0 1px #555, 1px 1px 1px #666; }
.wm-url { font: 400 17px/24px "Open Sans", sans-serif; color: #fff; text-shadow: 0 0 1px #666; }
.wm-right { position: absolute; left: 793px; top: 515px; width: 219px; height: 20px; box-sizing: border-box; padding-left: 10px; background: rgba(80, 80, 80, .4); color: #fff; font: 10.600px/20px "Open Sans", sans-serif; white-space: nowrap; }
</style>
